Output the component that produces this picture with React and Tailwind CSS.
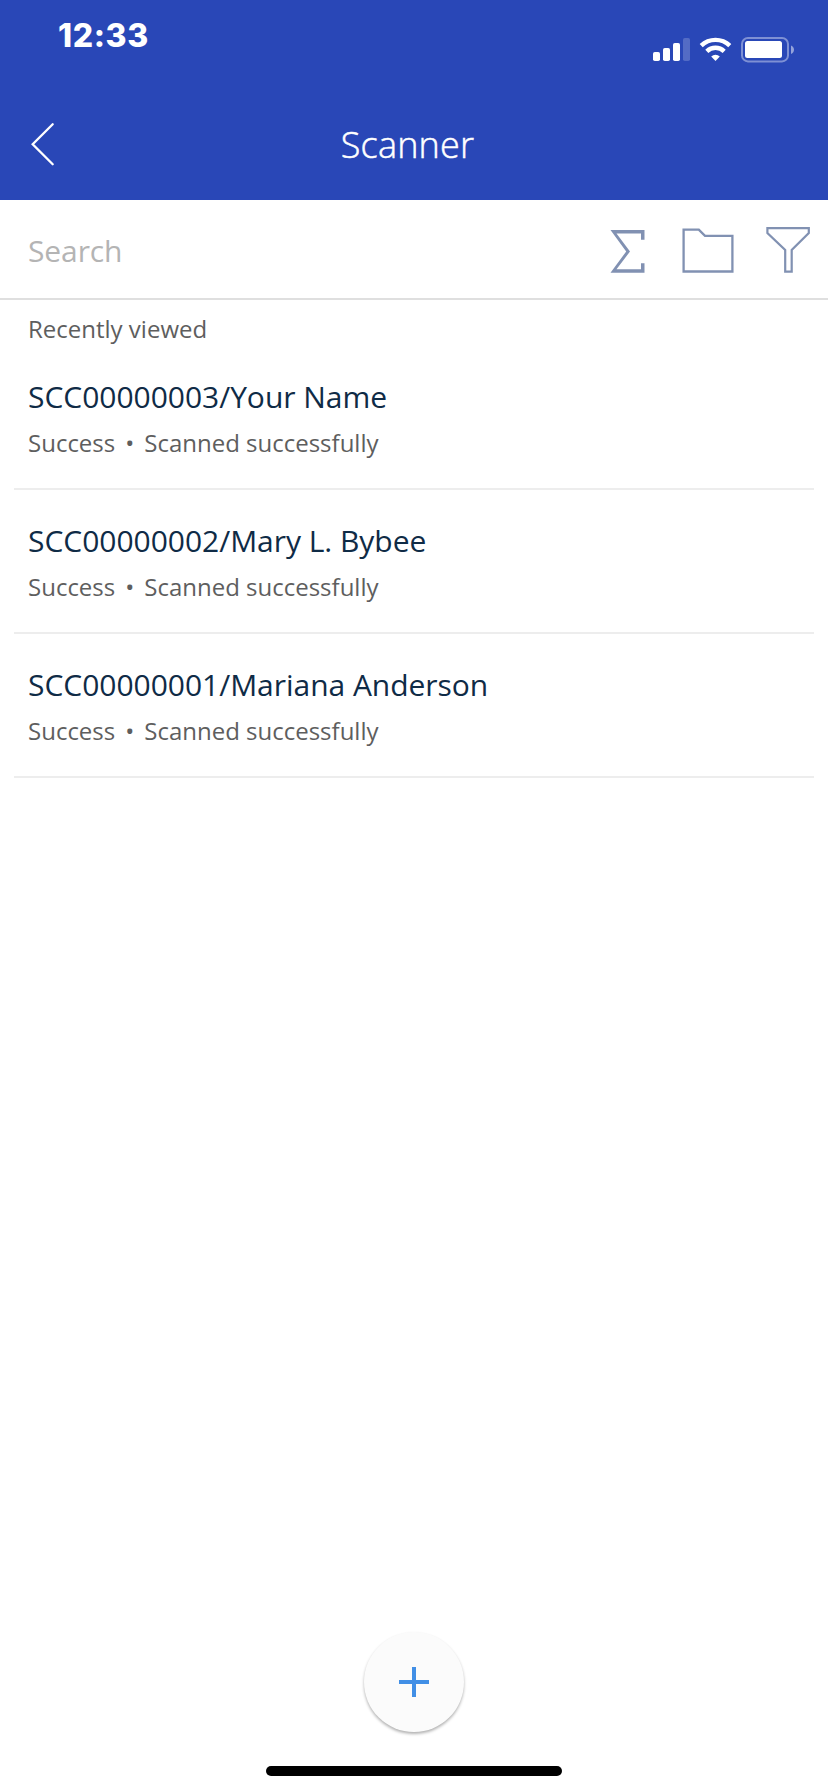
const scans = [
    { id: 'SCC00000003', name: 'Your Name', status: 'Success', message: 'Scanned successfully' },
    { id: 'SCC00000002', name: 'Mary L. Bybee', status: 'Success', message: 'Scanned successfully' },
    { id: 'SCC00000001', name: 'Mariana Anderson', status: 'Success', message: 'Scanned successfully' },
];

function StatusBar() {
    return (
        <div className="h-[88px] pl-[58px] pr-[33px] flex justify-between">
            <div className="pt-4 font-['Inter',sans-serif] font-extrabold text-[32px] leading-10 tracking-[0.6px]">12:33</div>
            <svg width="142" height="26" viewBox="0 0 142 26" fill="#fff" className="mt-[37px]">
                {/* signal */}
                <rect x="0" y="15" width="7" height="9" rx="1.8" />
                <rect x="10" y="11" width="7" height="13" rx="1.8" />
                <rect x="20" y="6" width="7" height="18" rx="1.8" />
                <rect x="30" y="1" width="7" height="23" rx="1.8" opacity="0.2" />
                {/* wifi */}
                <g fill="none" stroke="#fff" strokeWidth="4.4">
                    <path d="M48.2 8.6a20.6 20.6 0 0 1 28.6 0" />
                    <path d="M53.8 14.3a12.6 12.6 0 0 1 17.4 0" />
                </g>
                <path d="M62.5 24l-4.3-4.6a6.4 6.4 0 0 1 8.6 0z" />
                {/* battery */}
                <rect x="89" y="1" width="46" height="23.4" rx="6" fill="none" stroke="#fff" strokeWidth="2" opacity="0.4" />
                <rect x="92" y="4" width="37" height="17" rx="2.5" />
                <path d="M138 8.4c4 1.6 4 7 0 8.6z" opacity="0.5" />
            </svg>
        </div>
    );
}

function Header() {
    return (
        <header className="bg-[#2947b7] text-white">
            <StatusBar />
            <div className="h-28 pl-[30px] pr-[43px] grid grid-cols-[1fr_auto_1fr] items-center">
                <button aria-label="Back">
                    <svg width="26" height="44" viewBox="0 0 26 44" fill="none" stroke="#fff" strokeWidth="2.3" strokeLinecap="round">
                        <path d="M22.7 2.2L2.7 22.2l20 20" />
                    </svg>
                </button>
                <h1 className="pt-0.5 text-4xl font-light tracking-[0.2px] [-webkit-text-stroke:0.5px_#fff]">Scanner</h1>
            </div>
        </header>
    );
}

function Toolbar() {
    return (
        <div className="h-[100px] pl-7 pr-[18px] pt-0.5 flex items-center border-b-2 border-[#dfdfdf]">
            <div className="flex-1 pt-0.5 text-[30px] leading-10 tracking-[-0.1px] text-[#b4b4b4]">Search</div>
            <svg width="200" height="50" viewBox="610 225 200 50" fill="none" stroke="#8191b2">
                <path fill="#8191b2" stroke="none" d="M610.5 230H644.5V239.7H641V233.4H616.5L630 251.5L616.5 269.3H641V263.3H644.5V272.8H610.5L626.2 251.5Z" />
                <path strokeWidth="2.3" d="M683.6 229.6H698.8L705 235.9H732.4V271.5H683.6Z" />
                <path strokeWidth="2.2" d="M767.4 228.2H808.8V233L791.7 250V271.6H785.2V250L767.4 233Z" />
            </svg>
        </div>
    );
}

export default function App() {
    return (
        <div className="min-h-[1792px] flex flex-col bg-white font-['Open_Sans','Noto_Sans',sans-serif]">
            <Header />
            <Toolbar />
            <main className="flex-1">
                <h2 className="pt-[13px] pb-px px-7 text-2xl leading-8 text-[#5e5e5e]">Recently viewed</h2>
                <ul className="px-3.5">
                    {scans.map((scan) => (
                        <li key={scan.id} className="h-36 pt-[31px] px-3.5 border-b-2 border-[#ededed]">
                            <div className="text-[30px] leading-10 tracking-[-0.03px] text-[#0f2b46]">{scan.id}/{scan.name}</div>
                            <div className="mt-2.5 flex text-2xl leading-8 text-[#5e5e5e]">
                                <span>{scan.status}</span>
                                <span className="w-[29px] text-center">•</span>
                                <span>{scan.message}</span>
                            </div>
                        </li>
                    ))}
                </ul>
            </main>
            <footer className="flex flex-col items-center pb-4">
                <button aria-label="Add" className="size-[100px] rounded-full bg-[#fbfbfb] flex items-center justify-center shadow-[0_2px_3px_rgba(0,0,0,0.3)]">
                    <svg width="30" height="30" viewBox="0 0 30 30" stroke="#418fe6" strokeWidth="4">
                        <path d="M15 0v30M0 15h30" />
                    </svg>
                </button>
                <div className="mt-[34px] w-[296px] h-2.5 rounded-full bg-black" />
            </footer>
        </div>
    );
}
